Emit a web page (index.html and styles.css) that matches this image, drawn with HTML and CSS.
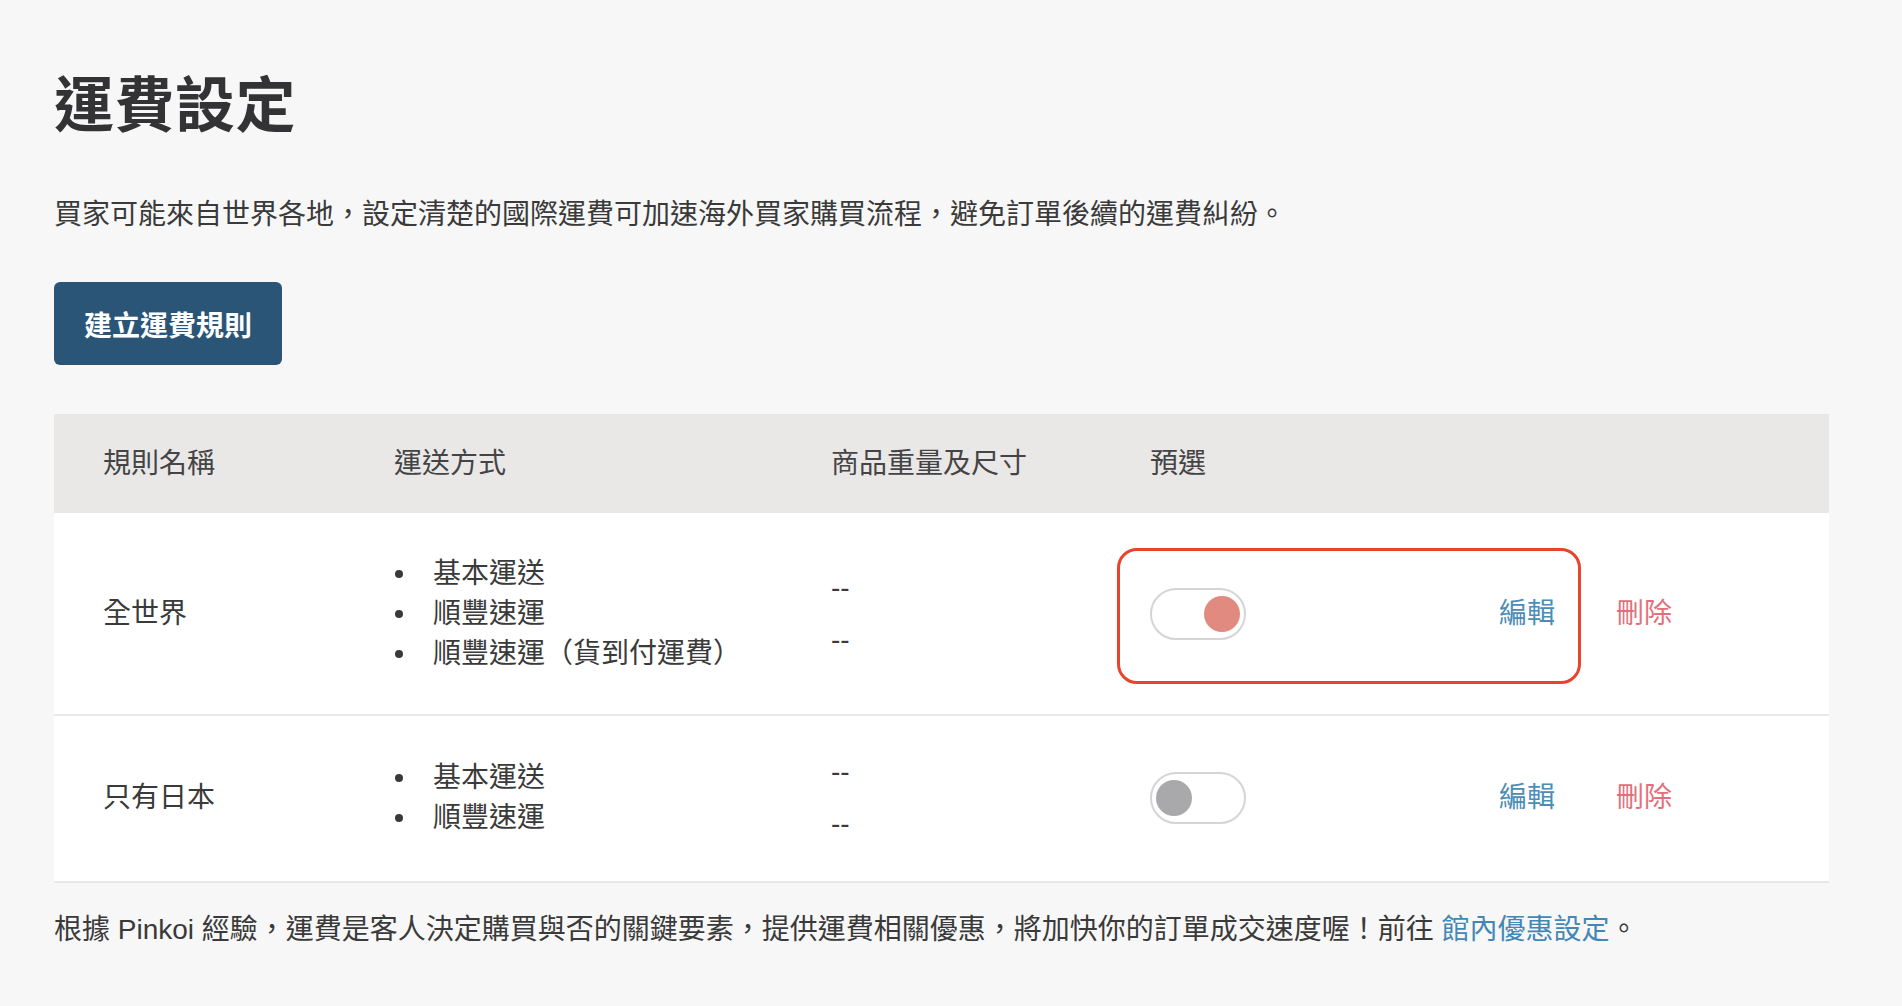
FILE: index.html
```html
<!DOCTYPE html>
<html lang="zh-Hant">
<head>
<meta charset="utf-8">
<title>運費設定</title>
<link rel="stylesheet" href="styles.css">
</head>
<body>
<main class="page">
  <h1 class="title">運費設定</h1>
  <p class="desc">買家可能來自世界各地，設定清楚的國際運費可加速海外買家購買流程，避免訂單後續的運費糾紛。</p>
  <button class="btn-primary" type="button">建立運費規則</button>

  <section class="rules">
    <div class="row head">
      <div class="cell">規則名稱</div>
      <div class="cell">運送方式</div>
      <div class="cell">商品重量及尺寸</div>
      <div class="cell">預選</div>
      <div class="cell"></div>
      <div class="cell"></div>
    </div>

    <div class="row body-row highlighted">
      <div class="cell">全世界</div>
      <div class="cell">
        <ul class="methods">
          <li>基本運送</li>
          <li>順豐速運</li>
          <li>順豐速運（貨到付運費）</li>
        </ul>
      </div>
      <div class="cell">
        <div class="dims"><span>--</span><span>--</span></div>
      </div>
      <div class="cell">
        <span class="toggle on"><span class="knob"></span></span>
      </div>
      <div class="cell"><a class="edit" href="#">編輯</a></div>
      <div class="cell"><a class="delete" href="#">刪除</a></div>
      <div class="annot"></div>
    </div>

    <div class="row body-row">
      <div class="cell">只有日本</div>
      <div class="cell">
        <ul class="methods">
          <li>基本運送</li>
          <li>順豐速運</li>
        </ul>
      </div>
      <div class="cell">
        <div class="dims"><span>--</span><span>--</span></div>
      </div>
      <div class="cell">
        <span class="toggle"><span class="knob"></span></span>
      </div>
      <div class="cell"><a class="edit" href="#">編輯</a></div>
      <div class="cell"><a class="delete" href="#">刪除</a></div>
    </div>
  </section>

  <p class="note">根據 Pinkoi 經驗，運費是客人決定購買與否的關鍵要素，提供運費相關優惠，將加快你的訂單成交速度喔！前往 <a class="link" href="#">館內優惠設定</a>。</p>
</main>
</body>
</html>
```

FILE: styles.css
```css
* { box-sizing: border-box; }

html, body {
  margin: 0;
  padding: 0;
  background: #f7f7f7;
}

body {
  font-family: "Liberation Sans", "Noto Sans CJK TC", sans-serif;
  color: #3a3a3a;
}

.page {
  padding: 71px 73px 0 54px;
}

.title {
  margin: 0;
  font-size: 60px;
  line-height: 72px;
  font-weight: 700;
  color: #333335;
  letter-spacing: 0.5px;
}

.desc {
  margin: 52px 0 0;
  font-size: 28px;
  line-height: 40px;
  color: #3a3a3a;
}

.btn-primary {
  display: block;
  margin-top: 47px;
  height: 83px;
  padding: 0 30px;
  border: 0;
  border-radius: 6px;
  background: #2a5577;
  color: #ffffff;
  font-family: inherit;
  font-size: 28px;
  font-weight: 700;
  letter-spacing: 0;
}

.rules {
  margin-top: 49px;
  background: #ffffff;
}

.row {
  display: grid;
  grid-template-columns: 291px 437px 319px 349px 117px 1fr;
  align-items: center;
  font-size: 28px;
  line-height: 40px;
}

.cell {
  padding-left: 49px;
}

.head {
  background: #e9e8e6;
  height: 99px;
  color: #444446;
}

.body-row {
  position: relative;
  padding: 41px 0 40px;
  border-bottom: 2px solid #e8e8e8;
  color: #3a3a3a;
}

.body-row:last-child {
  padding: 42px 0 43px;
}

.methods {
  list-style: none;
  margin: 0;
  padding: 0;
}

.methods li {
  position: relative;
  padding-left: 39px;
}

.methods li::before {
  content: "";
  position: absolute;
  left: 1px;
  top: 16px;
  width: 8px;
  height: 8px;
  border-radius: 50%;
  background: #3a3a3a;
}

.dims {
  display: flex;
  flex-direction: column;
  gap: 24px;
  line-height: 28px;
}

.toggle {
  display: flex;
  align-items: center;
  width: 96px;
  height: 52px;
  padding: 0 4px;
  border: 2px solid #d5d5d5;
  border-radius: 26px;
  background: #ffffff;
}

.toggle.on {
  justify-content: flex-end;
}

.knob {
  width: 36px;
  height: 36px;
  border-radius: 50%;
  background: #a9a9ac;
}

.toggle.on .knob {
  background: #e08a80;
}

.edit {
  color: #4b8db6;
  text-decoration: none;
}

.delete {
  color: #e2707b;
  text-decoration: none;
}

.annot {
  position: absolute;
  left: 1063px;
  top: 35px;
  width: 464px;
  height: 136px;
  border: 3px solid #e8442c;
  border-radius: 20px;
  pointer-events: none;
}

.note {
  margin: 27px 0 0;
  font-size: 28px;
  line-height: 40px;
  color: #3a3a3a;
}

.link {
  color: #4287b6;
  text-decoration: none;
}
```
